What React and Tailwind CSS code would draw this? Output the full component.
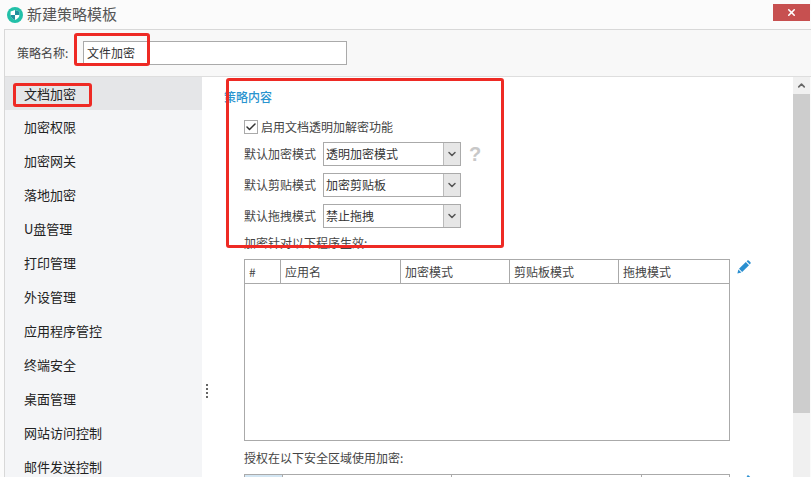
import { Check, ChevronDown, ChevronUp, X } from "lucide-react";

const menuItems = [
  "文档加密",
  "加密权限",
  "加密网关",
  "落地加密",
  "U盘管理",
  "打印管理",
  "外设管理",
  "应用程序管控",
  "终端安全",
  "桌面管理",
  "网站访问控制",
  "邮件发送控制",
];

const selects = [
  { label: "默认加密模式", value: "透明加密模式", help: true },
  { label: "默认剪贴模式", value: "加密剪贴板" },
  { label: "默认拖拽模式", value: "禁止拖拽" },
];

function Pencil({ className }) {
  return (
    <svg viewBox="0 0 14 14" className={className}>
      <path d="M0.4 13.6 L1.4 9.6 L4.4 12.6 Z" fill="#2a8fd0" />
      <path d="M2 8.8 L8.8 2 L12 5.2 L5.2 12 Z" fill="#2a8fd0" />
      <path d="M9.6 1.2 L10.4 0.5 Q11 0 11.7 0.5 L13.5 2.3 Q14 3 13.5 3.6 L12.8 4.4 Z" fill="#2a8fd0" />
    </svg>
  );
}

function SelectBox({ label, value, help }) {
  return (
    <div className="flex items-center h-6">
      <span className="w-[79px] text-[#444]">{label}</span>
      <div className="flex h-6 w-[138px] border border-[#aaa] bg-white">
        <span className="flex-1 pl-[2px] leading-[22px] text-[#333]">{value}</span>
        <span className="flex w-[17px] items-center justify-center border-l border-[#bbb] bg-[#e6e6e6]">
          <ChevronDown size={12} strokeWidth={3} className="text-[#555]" />
        </span>
      </div>
      {help && <span className="ml-[8px] font-['Liberation_Sans',sans-serif] text-[20px] font-bold leading-none text-[#c8c8c8]">?</span>}
    </div>
  );
}

function HeaderCell({ className, children }) {
  return (
    <div className={`flex items-center border-r border-[#aaa] pl-[4px] text-[#444] last:border-r-0 ${className}`}>
      {children}
    </div>
  );
}

export default function App() {
  return (
    <div className="relative h-[477px] w-[811px] overflow-hidden bg-[#fbfbfb] text-[12px] font-['Noto_Sans_CJK_SC','Liberation_Sans',sans-serif]">
      {/* Barra de título */}
      <div className="flex h-[29px] items-center pl-[7px]">
        <svg viewBox="0 0 16 16" className="h-[16px] w-[16px]">
          <circle cx="8" cy="8" r="8" fill="#22c0a8" />
          <path d="M8 3 L12.4 4.4 V8 Q12.4 11 8 13 Q3.6 11 3.6 8 V4.4 Z" fill="#fff" />
          <path d="M8 3 L12.4 4.4 V8 H8 Z M8 8 V13 Q3.6 11 3.6 8 Z" fill="#1f8f9c" />
        </svg>
        <span className="ml-[4px] text-[15px] text-[#555]">新建策略模板</span>
        <div className="ml-auto mr-px mb-[4px] flex h-[17px] w-[37px] items-center justify-center bg-[#c75050]">
          <X size={11} strokeWidth={3.5} className="text-white" />
        </div>
      </div>

      <div className="ml-[4px] h-[448px] border-l border-t border-[#d8d8d8]">
        {/* Nombre de la plantilla */}
        <div className="flex h-[47px] items-center border-b border-[#dedede] bg-[#f8f8f8] pl-[12px]">
          <span className="w-[66px] text-[#444]">策略名称:</span>
          <div className="flex h-[24px] w-[264px] items-center border border-[#aaa] bg-white pl-[3px] text-[#333]">文件加密</div>
        </div>

        <div className="flex h-[400px]">
          {/* Menú lateral */}
          <div className="w-[197px] bg-[#f4f5f7]">
            {menuItems.map((item, i) => (
              <div
                key={item}
                className={`flex items-center pl-[19px] text-[13px] text-[#222] ${i === 0 ? "h-[33px] bg-[#e5e6e8]" : "h-[34px]"}`}
              >
                {item}
              </div>
            ))}
          </div>

          <div className="flex w-[19px] flex-col items-center gap-[2px] bg-white pt-[307px] pr-[10px]">
            <i className="h-[2px] w-[2px] bg-[#666]" />
            <i className="h-[2px] w-[2px] bg-[#666]" />
            <i className="h-[2px] w-[2px] bg-[#666]" />
            <i className="h-[2px] w-[2px] bg-[#666]" />
          </div>

          {/* Contenido */}
          <div className="w-[572px] overflow-hidden bg-white">
            <div className="pl-[3px] pt-[11px] leading-[18px] font-medium text-[#2a94cf]">策略内容</div>
            <div className="pl-[23px]">
              <div className="mt-[12px] flex h-[18px] items-center">
                <span className="flex h-[14px] w-[14px] items-center justify-center border border-[#aaa] bg-white">
                  <Check size={12} strokeWidth={3} className="text-[#333]" />
                </span>
                <span className="ml-[3px] text-[#444]">启用文档透明加解密功能</span>
              </div>
              <div className="mt-[6px] flex flex-col gap-[7px]">
                {selects.map((s) => (
                  <SelectBox key={s.label} {...s} />
                ))}
              </div>
              <div className="mt-[6px] leading-[18px] text-[#444]">加密针对以下程序生效:</div>

              <div className="mt-[7px] flex items-start">
                <div className="h-[182px] w-[486px] border border-[#aaa]">
                  <div className="flex h-[24px] border-b border-[#aaa]">
                    <HeaderCell className="w-[36px]">#</HeaderCell>
                    <HeaderCell className="w-[120px]">应用名</HeaderCell>
                    <HeaderCell className="w-[109px]">加密模式</HeaderCell>
                    <HeaderCell className="w-[109px]">剪贴板模式</HeaderCell>
                    <HeaderCell className="flex-1">拖拽模式</HeaderCell>
                  </div>
                </div>
                <Pencil className="ml-[7px] mt-[1px] h-[14px] w-[14px]" />
              </div>

              <div className="mt-[8px] leading-[18px] text-[#444]">授权在以下安全区域使用加密:</div>
              <div className="mt-[7px] flex items-start">
                <div className="h-[40px] w-[486px] border border-[#aaa]">
                  <div className="flex h-[24px]">
                    <div className="w-[38px] border-r border-[#aaa] bg-[#d3e6f3]" />
                    <div className="w-[169px] border-r border-[#aaa]" />
                    <div className="w-[190px] border-r border-[#aaa]" />
                  </div>
                </div>
                <Pencil className="ml-[7px] mt-[1px] h-[14px] w-[14px]" />
              </div>
            </div>
          </div>

          {/* Barra de desplazamiento */}
          <div className="flex w-[17px] flex-col bg-[#f0f0f0]">
            <div className="flex h-[17px] items-center justify-center">
              <ChevronUp size={11} strokeWidth={3.5} className="text-[#666]" />
            </div>
            <div className="h-[319px] bg-[#cdcdcd]" />
          </div>
        </div>
      </div>

      {/* Marcas rojas de anotación sobre la captura */}
      <div className="absolute left-[74px] top-[33px] h-[33px] w-[76px] rounded-[3px] border-[3px] border-[#ee2a24]" />
      <div className="absolute left-[13px] top-[83px] h-[24px] w-[79px] rounded-[3px] border-[3px] border-[#ee2a24]" />
      <div className="absolute left-[226px] top-[78px] h-[170px] w-[278px] rounded-[3px] border-[3px] border-[#ee2a24]" />
    </div>
  );
}
